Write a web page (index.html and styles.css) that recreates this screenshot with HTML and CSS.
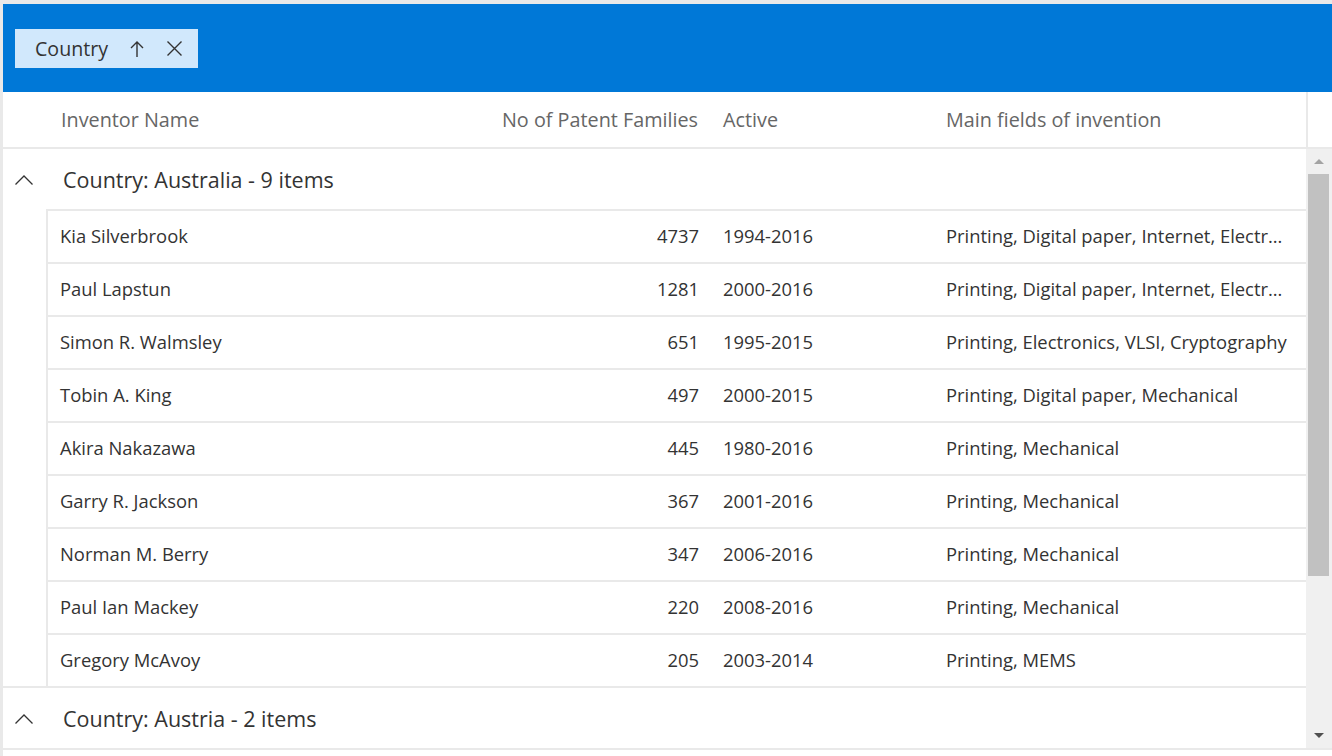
FILE: index.html
```html
<!DOCTYPE html>
<html lang="en">
<head>
<meta charset="utf-8">
<title>Inventors grid</title>
<link rel="stylesheet" href="styles.css">
</head>
<body>
<div class="grid">
  <div class="group-panel">
    <div class="chip">
      <span class="chip-label">Country</span>
      <svg class="chip-icon arrow-icon" width="14" height="18" viewBox="0 0 14 18"><path d="M7 17V2M1 8L7 2L13 8" fill="none" stroke="#333" stroke-width="1.4"/></svg>
      <svg class="chip-icon" width="17" height="17" viewBox="0 0 17 17"><path d="M1.5 1.5L15.5 15.5M15.5 1.5L1.5 15.5" fill="none" stroke="#333" stroke-width="1.4"/></svg>
    </div>
  </div>
  <div class="header">
    <div class="hcell"></div>
    <div class="hcell first">Inventor Name</div>
    <div class="hcell right">No of Patent Families</div>
    <div class="hcell">Active</div>
    <div class="hcell">Main fields of invention</div>
    <div class="hcell filler"></div>
  </div>
  <div class="body">
    <div class="content">
      <div class="group">
        <div class="group-head">
          <svg class="chev" width="18" height="10" viewBox="0 0 18 10"><path d="M0.5 9.5L9 1L17.5 9.5" fill="none" stroke="#333" stroke-width="1.3"/></svg>
          <span class="group-title">Country: Australia - 9 items</span>
        </div>
        <div class="rows">
          <div class="row"><div class="cell">Kia Silverbrook</div><div class="cell right">4737</div><div class="cell">1994-2016</div><div class="cell">Printing, Digital paper, Internet, Electr…</div></div>
          <div class="row"><div class="cell">Paul Lapstun</div><div class="cell right">1281</div><div class="cell">2000-2016</div><div class="cell">Printing, Digital paper, Internet, Electr…</div></div>
          <div class="row"><div class="cell">Simon R. Walmsley</div><div class="cell right">651</div><div class="cell">1995-2015</div><div class="cell">Printing, Electronics, VLSI, Cryptography</div></div>
          <div class="row"><div class="cell">Tobin A. King</div><div class="cell right">497</div><div class="cell">2000-2015</div><div class="cell">Printing, Digital paper, Mechanical</div></div>
          <div class="row"><div class="cell">Akira Nakazawa</div><div class="cell right">445</div><div class="cell">1980-2016</div><div class="cell">Printing, Mechanical</div></div>
          <div class="row"><div class="cell">Garry R. Jackson</div><div class="cell right">367</div><div class="cell">2001-2016</div><div class="cell">Printing, Mechanical</div></div>
          <div class="row"><div class="cell">Norman M. Berry</div><div class="cell right">347</div><div class="cell">2006-2016</div><div class="cell">Printing, Mechanical</div></div>
          <div class="row"><div class="cell">Paul Ian Mackey</div><div class="cell right">220</div><div class="cell">2008-2016</div><div class="cell">Printing, Mechanical</div></div>
          <div class="row"><div class="cell">Gregory McAvoy</div><div class="cell right">205</div><div class="cell">2003-2014</div><div class="cell">Printing, MEMS</div></div>
        </div>
      </div>
      <div class="group">
        <div class="group-head">
          <svg class="chev" width="18" height="10" viewBox="0 0 18 10"><path d="M0.5 9.5L9 1L17.5 9.5" fill="none" stroke="#333" stroke-width="1.3"/></svg>
          <span class="group-title">Country: Austria - 2 items</span>
        </div>
      </div>
    </div>
    <div class="scrollbar">
      <div class="arrow up"></div>
      <div class="track"><div class="thumb"></div></div>
      <div class="arrow down"></div>
    </div>
  </div>
  <div class="footer"></div>
</div>
</body>
</html>
```

FILE: styles.css
```css
html, body {
  margin: 0;
  padding: 0;
  background: #ffffff;
}
body {
  font-family: "Open Sans", "Noto Sans", "Liberation Sans", sans-serif;
  color: #333333;
}
.grid {
  width: 1332px;
  height: 756px;
  box-sizing: border-box;
  border-top: 4px solid #e9e9e9;
  border-left: 3px solid #e9e9e9;
  display: flex;
  flex-direction: column;
  overflow: hidden;
}
.group-panel {
  height: 88px;
  background: #0078d7;
  padding: 25px 0 0 12px;
  box-sizing: border-box;
  flex: none;
}
.chip {
  display: inline-flex;
  align-items: center;
  height: 39px;
  width: 183px;
  box-sizing: border-box;
  background: #d1e8fc;
  padding-left: 20px;
}
.chip-label {
  font-size: 19.6px;
  color: #333;
  margin-right: 22px;
  margin-top: -1px;
}
.chip-icon.arrow-icon {
  margin-right: 22px;
}
.header {
  flex: none;
  display: grid;
  grid-template-columns: 45px 438px 225px 223px 372px 1fr;
  height: 57px;
  box-sizing: border-box;
  border-bottom: 2px solid #e9e9e9;
}
.hcell {
  display: flex;
  align-items: center;
  padding: 0 12px;
  font-size: 19.8px;
  color: #666666;
  white-space: nowrap;
}
.hcell.first {
  padding-left: 13px;
}
.hcell.right {
  justify-content: flex-end;
  padding-right: 13px;
}
.hcell.filler {
  border-left: 2px solid #e9e9e9;
  padding: 0;
}
.body {
  height: 599px;
  flex: none;
  display: flex;
  min-height: 0;
}
.content {
  flex: 1;
  overflow: hidden;
}
.group + .group .group-head {
  border-top: 2px solid #e9e9e9;
}
.group-head {
  height: 60px;
  display: flex;
  align-items: center;
}
.chev {
  margin-left: 12px;
  margin-right: 30px;
  margin-top: 2px;
}
.group-title {
  font-size: 21.5px;
  color: #333;
}
.rows {
  margin-left: 43px;
  border-left: 2px solid #e9e9e9;
}
.row {
  display: grid;
  grid-template-columns: 438px 225px 223px 371px;
  height: 53px;
  box-sizing: border-box;
  border-top: 2px solid #e9e9e9;
}
.cell {
  display: flex;
  align-items: center;
  padding: 0 12px 2px 12px;
  font-size: 18.4px;
  color: #333;
  white-space: nowrap;
  overflow: hidden;
  min-width: 0;
}
.cell.right {
  justify-content: flex-end;
}
.scrollbar {
  flex: none;
  width: 26px;
  background: #f0f0f0;
  display: flex;
  flex-direction: column;
}
.arrow {
  height: 25px;
  flex: none;
  display: flex;
  justify-content: center;
  align-items: center;
}
.arrow::before {
  content: "";
  width: 0;
  height: 0;
  border-left: 5px solid transparent;
  border-right: 5px solid transparent;
}
.arrow.up::before {
  border-bottom: 5px solid #a3a3a3;
}
.arrow.down::before {
  border-top: 5px solid #505050;
}
.track {
  flex: 1;
  padding: 0 3px 0 2px;
}
.thumb {
  height: 402px;
  background: #c1c1c1;
}
.footer {
  flex: 1;
  border-top: 2px solid #e9e9e9;
  background: #ffffff;
}
```
